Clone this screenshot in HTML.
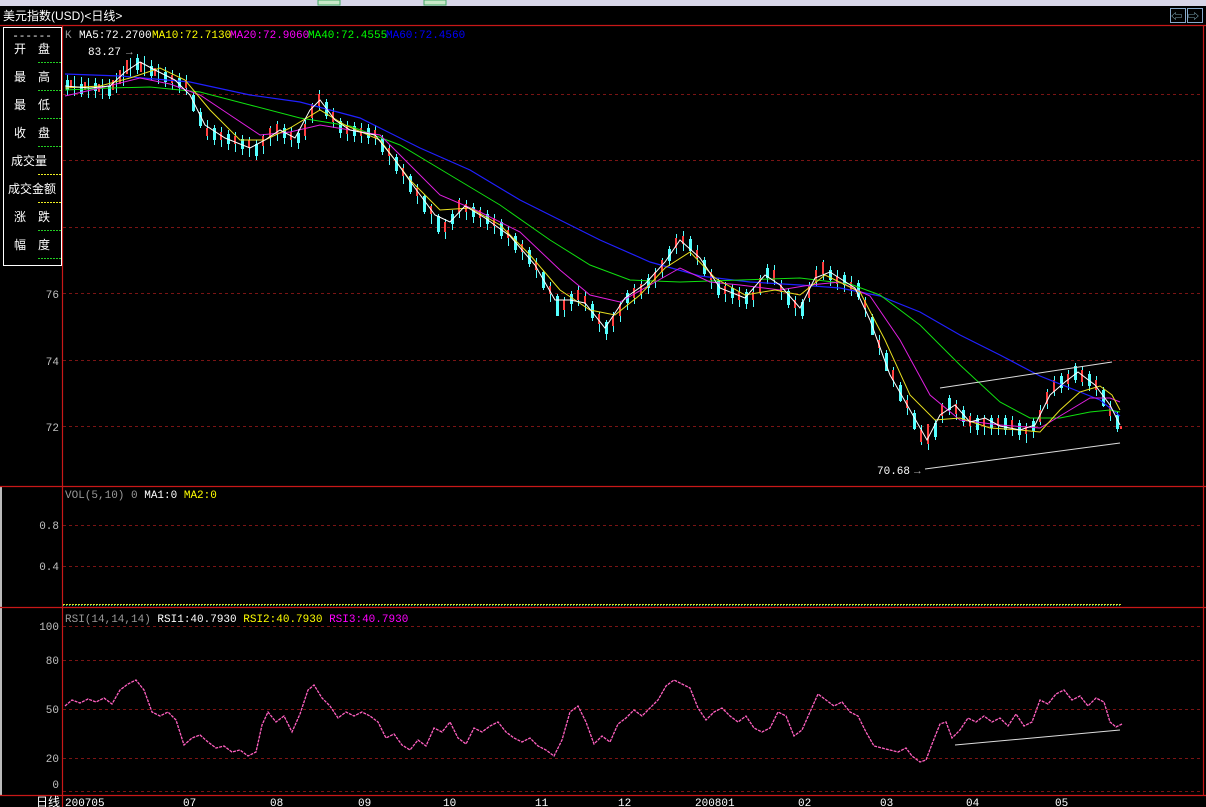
<!DOCTYPE html>
<html><head><meta charset="utf-8"><style>
html,body{margin:0;padding:0;background:#000;width:1206px;height:807px;overflow:hidden}
svg{display:block}
text{font-family:"Liberation Mono","Noto Sans CJK SC",monospace;font-size:11px}
.c{font-family:"Liberation Sans","Noto Sans CJK SC",sans-serif;font-size:12px;fill:#fff}
</style></head><body>
<svg width="1206" height="807" xmlns="http://www.w3.org/2000/svg">
<rect x="0" y="0" width="1206" height="807" fill="#000"/>
<rect x="0" y="0" width="1206" height="6" fill="#d8d6e8"/>
<rect x="318" y="0" width="22" height="5" fill="#c8e8c8" stroke="#4a6"/>
<rect x="424" y="0" width="22" height="5" fill="#c8e8c8" stroke="#4a6"/>
<text class="c" x="3" y="20">美元指数(USD)&lt;日线&gt;</text>
<rect x="1170.5" y="8.5" width="15" height="14" fill="none" stroke="#8ac"/><text x="1171" y="20" fill="#9cd">⇦</text>
<rect x="1187.5" y="8.5" width="15" height="14" fill="none" stroke="#8ac"/><text x="1188" y="20" fill="#9cd">⇨</text>
<rect x="0" y="487" width="2" height="308" fill="#bbb"/>
<g stroke="#c81818" stroke-width="1.2" fill="none">
<line x1="0" y1="25.5" x2="1206" y2="25.5"/>
<line x1="62.5" y1="26" x2="62.5" y2="807"/>
<line x1="1203.5" y1="26" x2="1203.5" y2="795"/>
<line x1="0" y1="486.5" x2="1206" y2="486.5"/>
<line x1="0" y1="607.5" x2="1206" y2="607.5"/>
<line x1="0" y1="795.5" x2="1206" y2="795.5"/>
</g>
<g stroke="#7a1414" stroke-width="1" stroke-dasharray="3,3">
<line x1="63" y1="94.5" x2="1203" y2="94.5"/><line x1="63" y1="160.5" x2="1203" y2="160.5"/>
<line x1="63" y1="227.5" x2="1203" y2="227.5"/><line x1="63" y1="293.5" x2="1203" y2="293.5"/>
<line x1="63" y1="360.5" x2="1203" y2="360.5"/><line x1="63" y1="426.5" x2="1203" y2="426.5"/>
<line x1="63" y1="525.5" x2="1203" y2="525.5"/><line x1="63" y1="566.5" x2="1203" y2="566.5"/>
<line x1="63" y1="626.5" x2="1203" y2="626.5"/><line x1="63" y1="660.5" x2="1203" y2="660.5"/>
<line x1="63" y1="709.5" x2="1203" y2="709.5"/><line x1="63" y1="758.5" x2="1203" y2="758.5"/>
<line x1="63" y1="791.5" x2="1203" y2="791.5"/>
</g>
<g fill="#c0c0c0" text-anchor="end">
<text x="59" y="298">76</text><text x="59" y="365">74</text><text x="59" y="431">72</text>
<text x="59" y="529">0.8</text><text x="59" y="570">0.4</text>
<text x="59" y="630">100</text><text x="59" y="664">80</text><text x="59" y="713">50</text>
<text x="59" y="762">20</text><text x="59" y="788">0</text>
</g>
<rect x="3.5" y="27.5" width="58" height="238" fill="#000" stroke="#fff"/>
<text x="32" y="39" fill="#fff" text-anchor="middle">------</text>
<text class="c" x="14" y="53">开　盘</text><text class="c" x="14" y="81">最　高</text>
<text class="c" x="14" y="109">最　低</text><text class="c" x="14" y="137">收　盘</text>
<text class="c" x="11" y="165">成交量</text><text class="c" x="8" y="193">成交金额</text>
<text class="c" x="14" y="221">涨　跌</text><text class="c" x="14" y="249">幅　度</text>
<g stroke-width="1" stroke-dasharray="2,1">
<line x1="38" y1="62.5" x2="61" y2="62.5" stroke="#2c2"/><line x1="38" y1="90.5" x2="61" y2="90.5" stroke="#2c2"/>
<line x1="38" y1="118.5" x2="61" y2="118.5" stroke="#2c2"/><line x1="38" y1="146.5" x2="61" y2="146.5" stroke="#2c2"/>
<line x1="38" y1="174.5" x2="61" y2="174.5" stroke="#ee2"/><line x1="38" y1="202.5" x2="61" y2="202.5" stroke="#ee2"/>
<line x1="38" y1="230.5" x2="61" y2="230.5" stroke="#2c2"/><line x1="38" y1="258.5" x2="61" y2="258.5" stroke="#2c2"/>
</g>
<text x="65" y="38" fill="#999">K</text>
<text x="79" y="38" fill="#fff">MA5:72.2700</text>
<text x="152" y="38" fill="#ff0">MA10:72.7130</text>
<text x="230" y="38" fill="#f0f">MA20:72.9060</text>
<text x="308" y="38" fill="#0f0">MA40:72.4555</text>
<text x="386" y="38" fill="#00f">MA60:72.4560</text>
<text x="65" y="498" fill="#999">VOL(5,10) 0 <tspan fill="#fff">MA1:0</tspan> <tspan fill="#ff0">MA2:0</tspan></text>
<text x="65" y="622" fill="#999">RSI(14,14,14) <tspan fill="#fff">RSI1:40.7930</tspan> <tspan fill="#ff0">RSI2:40.7930</tspan> <tspan fill="#f0f">RSI3:40.7930</tspan></text>
<line x1="63" y1="604.5" x2="1122" y2="604.5" stroke="#dd2" stroke-dasharray="2,1"/>
<line x1="63" y1="605.5" x2="1122" y2="605.5" stroke="#2c8" stroke-dasharray="1,2"/>

<!-- cyan wicks -->
<path fill="none" stroke="#54ffff" stroke-width="1" d="M67.5 75v20M74.5 76v20M81.5 77v20M88.5 78v20M95.5 78v20M102.5 79v20M109.5 79v20M116.5 73v20M123.5 66v20M130.5 58v20M137.5 54v20M144.5 56v20M151.5 60v20M158.5 64v20M165.5 67v20M172.5 70v20M179.5 73v20M186.5 75v20M193.5 92v20M200.5 108v20M207.5 120v20M214.5 125v20M221.5 127v20M228.5 130v20M235.5 132v20M242.5 135v20M249.5 137v20M256.5 140v20M263.5 134v20M270.5 126v20M277.5 121v20M284.5 124v20M291.5 127v20M298.5 129v20M305.5 120v20M312.5 103v20M319.5 90v20M326.5 99v20M333.5 108v20M340.5 118v20M347.5 121v20M354.5 122v20M361.5 123v20M368.5 124v20M375.5 125v20M382.5 135v20M389.5 145v20M396.5 154v20M403.5 164v20M410.5 174v20M417.5 184v20M424.5 194v20M431.5 204v20M438.5 214v20M445.5 219v20M452.5 210v20M459.5 198v20M466.5 200v20M473.5 203v20M480.5 207v20M487.5 210v20M494.5 214v20M501.5 219v20M508.5 226v20M515.5 233v20M522.5 240v20M529.5 247v20M536.5 258v20M543.5 270v20M550.5 282v20M557.5 294v20M564.5 297v20M571.5 291v20M578.5 286v20M585.5 291v20M592.5 301v20M599.5 312v20M606.5 320v20M613.5 312v20M620.5 302v20M627.5 290v20M634.5 284v20M641.5 279v20M648.5 274v20M655.5 268v20M662.5 258v20M669.5 246v20M676.5 234v20M683.5 231v20M690.5 236v20M697.5 245v20M704.5 257v20M711.5 269v20M718.5 278v20M725.5 282v20M732.5 284v20M739.5 287v20M746.5 289v20M753.5 287v20M760.5 275v20M767.5 264v20M774.5 265v20M781.5 280v20M788.5 288v20M795.5 296v20M802.5 299v20M809.5 282v20M816.5 266v20M823.5 260v20M830.5 266v20M837.5 270v20M844.5 272v20M851.5 276v20M858.5 280v20M865.5 297v20M872.5 314v20M879.5 335v20M886.5 350v20M893.5 367v20M900.5 382v20M907.5 395v20M914.5 410v20M921.5 425v20M928.5 430v20M935.5 420v20M942.5 403v20M949.5 395v20M956.5 400v20M963.5 406v20M970.5 413v20M977.5 415v20M984.5 415v20M991.5 415v20M998.5 415v20M1005.5 415v20M1012.5 416v20M1019.5 420v20M1026.5 423v20M1033.5 418v20M1040.5 405v20M1047.5 389v20M1054.5 376v20M1061.5 373v20M1068.5 370v20M1075.5 363v20M1082.5 366v20M1089.5 371v20M1096.5 376v20M1103.5 387v20M1110.5 401v20M1117.5 412v20"/>
<!-- cyan bodies -->
<path fill="none" stroke="#54ffff" stroke-width="3" d="M67.5 80v10M81.5 84v10M95.5 83v8M109.5 86v10M137.5 58v12M151.5 66v10M165.5 72v10M179.5 78v10M193.5 95v16M200.5 112v14M214.5 128v12M228.5 134v10M242.5 139v10M256.5 144v12M284.5 128v10M298.5 133v10M326.5 102v14M340.5 121v12M354.5 126v10M368.5 128v10M382.5 138v14M396.5 157v14M410.5 176v16M424.5 196v16M438.5 216v16M452.5 214v10M473.5 207v10M487.5 214v10M501.5 222v14M515.5 236v14M529.5 250v14M543.5 272v16M557.5 296v20M571.5 294v10M592.5 304v14M606.5 322v12M627.5 293v10M648.5 278v10M669.5 249v12M690.5 239v12M704.5 260v14M718.5 281v14M732.5 288v10M746.5 292v12M767.5 268v10M788.5 291v14M802.5 302v14M830.5 270v10M844.5 275v10M858.5 283v14M872.5 317v18M886.5 353v18M900.5 385v16M914.5 413v16M935.5 423v14M949.5 398v12M963.5 410v12M977.5 418v12M991.5 418v10M1005.5 418v12M1019.5 423v12M1033.5 421v10M1061.5 376v12M1075.5 366v14M1089.5 374v12M1103.5 390v16M1117.5 415v14"/>
<!-- red candles -->
<path fill="none" stroke="#ff4040" stroke-width="2" d="M71 80v8M85 82v8M99 84v8M113 80v10M120 70v14M127 60v14M141 62v10M155 68v8M172 75v8M186 80v8M207 128v8M221 132v8M235 136v8M249 140v8M263 136v10M270 128v10M277 124v10M291 132v8M305 124v12M312 104v14M319 94v12M333 112v10M347 126v8M361 128v8M375 130v8M389 148v8M403 168v8M417 188v8M431 206v8M445 222v10M459 200v12M466 204v8M480 210v8M494 218v8M508 230v8M522 244v8M536 262v8M550 286v8M564 300v10M578 290v10M585 296v8M599 314v10M613 316v10M620 304v12M634 288v10M641 284v10M655 272v10M662 260v12M676 238v10M683 236v8M697 250v8M711 272v8M725 286v8M739 292v8M753 292v8M760 278v14M774 270v10M781 284v8M795 300v8M809 286v12M816 270v12M823 262v12M837 276v8M851 282v8M865 300v8M879 340v8M893 370v10M907 400v8M921 430v12M928 424v20M942 404v12M956 404v10M970 416v10M984 418v8M998 418v8M1012 420v8M1026 426v8M1040 410v12M1047 392v12M1054 380v12M1068 374v10M1082 370v12M1096 380v10M1110 406v10M1121 426v3"/>

<!-- MAs -->
<polyline fill="none" stroke="#2020ff" stroke-width="1.2" points="65,74 120,76 190,82 250,95 300,102 360,118 420,148 470,170 520,200 560,220 600,240 650,262 700,276 750,282 800,285 840,288 880,296 920,312 960,335 1000,355 1040,376 1080,392 1100,400 1120,416"/>
<polyline fill="none" stroke="#10e010" stroke-width="1" points="65,90 110,88 150,87 200,92 250,105 300,118 350,126 400,145 450,175 500,205 550,240 590,265 630,280 680,282 740,280 800,278 850,284 880,295 920,325 960,365 1000,402 1030,418 1060,418 1090,412 1110,410 1120,412"/>
<polyline fill="none" stroke="#e020e0" stroke-width="1" points="65,96 100,88 140,78 170,84 200,95 230,115 260,135 290,132 320,125 350,130 380,135 410,165 440,195 480,212 520,232 560,270 590,295 620,302 650,285 680,268 710,282 740,285 780,290 810,285 840,282 870,296 900,340 930,395 960,420 1000,425 1040,428 1070,410 1090,398 1110,398 1120,402"/>
<polyline fill="none" stroke="#e8e020" stroke-width="1" points="65,88 100,86 130,78 160,68 185,80 210,110 240,140 265,140 290,128 320,110 345,125 380,140 410,180 440,210 470,208 500,225 530,255 560,290 590,310 615,315 640,295 665,268 690,252 715,278 745,295 775,290 800,295 825,275 860,292 885,340 910,395 935,420 960,418 990,428 1020,430 1040,432 1060,410 1080,392 1100,386 1112,395 1120,410"/>
<polyline fill="none" stroke="#ffffff" stroke-width="1" points="65,86 90,88 110,86 125,72 140,62 155,70 175,80 190,95 205,125 225,138 250,148 265,140 280,130 295,138 310,110 320,100 335,120 350,130 375,135 395,160 415,188 435,215 450,222 465,206 485,218 510,236 535,265 555,300 570,300 585,303 605,328 625,298 645,284 665,262 680,240 700,258 720,288 745,298 765,275 780,285 800,308 815,278 830,272 855,288 870,320 890,375 910,410 927,440 940,415 955,405 970,422 985,418 1000,426 1020,430 1035,425 1050,395 1065,382 1078,372 1095,385 1110,405 1120,425"/>

<!-- RSI -->
<polyline fill="none" stroke="#ff60c0" stroke-width="1.3" stroke-dasharray="3,1" points="65,706 72,700 80,703 88,699 96,702 104,698 112,704 120,690 128,684 136,680 144,690 152,712 160,716 168,712 176,720 184,745 192,738 200,735 208,742 216,748 224,746 232,752 240,750 248,756 256,752 262,725 268,712 276,722 284,716 292,732 300,714 308,690 314,685 322,698 330,706 338,718 346,712 354,716 362,712 370,716 378,722 386,738 394,734 402,745 410,750 418,740 426,746 434,728 442,732 450,722 458,738 466,744 474,728 482,732 490,726 498,722 506,732 514,738 522,742 530,738 538,746 546,750 554,756 562,740 570,712 578,706 586,722 594,744 602,736 610,742 618,724 626,718 634,710 642,716 650,708 658,700 666,686 674,680 682,684 690,688 698,708 706,720 714,712 722,708 730,716 738,722 746,716 754,728 762,732 770,728 778,712 786,716 794,736 802,730 810,712 818,694 826,700 834,706 842,702 850,712 858,716 866,732 874,746 882,748 890,750 898,752 906,748 912,756 920,762 926,760 932,744 940,724 946,722 952,738 960,730 968,718 976,722 984,716 992,722 1000,718 1008,726 1016,714 1024,726 1032,722 1040,700 1048,704 1056,694 1064,690 1072,700 1080,696 1088,706 1096,698 1104,702 1110,722 1116,727 1122,724"/>

<g stroke="#ddd" stroke-width="1"><line x1="925" y1="469" x2="1120" y2="443"/><line x1="940" y1="388" x2="1112" y2="362"/><line x1="955" y1="745" x2="1120" y2="730"/></g>
<text x="88" y="55" fill="#fff">83.27</text><text x="126" y="55" fill="#aaa">→</text>
<text x="877" y="474" fill="#fff">70.68</text><text x="914" y="474" fill="#aaa">→</text>

<text class="c" x="36" y="806">日线</text>
<g fill="#fff"><text x="65" y="806">200705</text><text x="183" y="806">07</text><text x="270" y="806">08</text><text x="358" y="806">09</text><text x="443" y="806">10</text><text x="535" y="806">11</text><text x="618" y="806">12</text><text x="695" y="806">200801</text><text x="798" y="806">02</text><text x="880" y="806">03</text><text x="966" y="806">04</text><text x="1055" y="806">05</text></g>
</svg>
</body></html>
